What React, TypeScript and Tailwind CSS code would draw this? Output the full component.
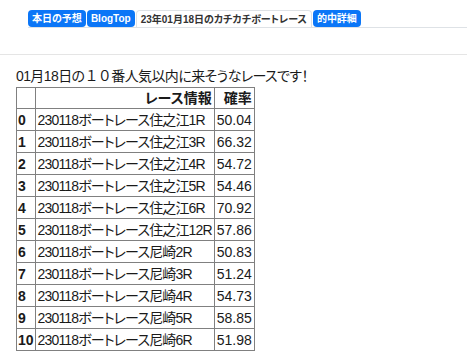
import React from 'react';

const rows: [string, string][] = [
  ['230118ボートレース住之江1R', '50.04'],
  ['230118ボートレース住之江3R', '66.32'],
  ['230118ボートレース住之江4R', '54.72'],
  ['230118ボートレース住之江5R', '54.46'],
  ['230118ボートレース住之江6R', '70.92'],
  ['230118ボートレース住之江12R', '57.86'],
  ['230118ボートレース尼崎2R', '50.83'],
  ['230118ボートレース尼崎3R', '51.24'],
  ['230118ボートレース尼崎4R', '54.73'],
  ['230118ボートレース尼崎5R', '58.85'],
  ['230118ボートレース尼崎6R', '51.98'],
  ['230118ボートレース尼崎8R', '52.10'],
];

const Tab: React.FC<{ label: string; active?: boolean }> = ({ label, active }) => (
  <div
    className={
      active
        ? 'h-[17px] flex items-center px-[4px] rounded-t-[4px] border border-b-0 border-[#dee2e6] bg-white text-[#333] text-[10px] font-bold'
        : 'h-[17px] flex items-center px-[4px] rounded-[4px] bg-[#0b76f7] text-white text-[10px] font-bold'
    }
  >
    {label}
  </div>
);

const App: React.FC = () => {
  return (
    <div
      className="min-h-screen bg-white text-[#1a1a1a] [font-feature-settings:'palt']"
      style={{ fontFamily: '"Liberation Sans", "Noto Sans CJK JP", sans-serif' }}
    >
      <div className="pt-[10px] pl-[28px]">
        <div className="flex items-end gap-px border-b border-[#dee2e6]">
          <Tab label="本日の予想" />
          <Tab label="BlogTop" />
          <Tab label="23年01月18日のカチカチボートレース" active />
          <Tab label="的中詳細" />
        </div>
      </div>
      <div className="mt-[26px] h-px bg-[#e5e5e5]" />
      <div className="px-4 pt-[11px]">
        <p className="text-[14px] leading-5 tracking-[-0.6px]">
          01月18日の<span className="[font-feature-settings:normal]">１０</span>番人気以内に来そうなレースです！
        </p>
        <table className="mt-px border-collapse border border-[#808080] text-[14px] leading-5">
          <thead>
            <tr className="h-[21px]">
              <th className="border border-[#808080] px-px"></th>
              <th className="border border-[#808080] px-[2px] text-right font-bold">レース情報</th>
              <th className="border border-[#808080] px-[2px] text-right font-bold">確率</th>
            </tr>
          </thead>
          <tbody>
            {rows.map(([name, rate], i) => (
              <tr key={i} className="h-[22px]">
                <th className="border border-[#808080] px-px text-left font-bold">{i}</th>
                <td className="border border-[#808080] px-[2px] tracking-[-0.85px]">{name}</td>
                <td className="border border-[#808080] px-[2px]">{rate}</td>
              </tr>
            ))}
          </tbody>
        </table>
      </div>
    </div>
  );
};

export default App;
